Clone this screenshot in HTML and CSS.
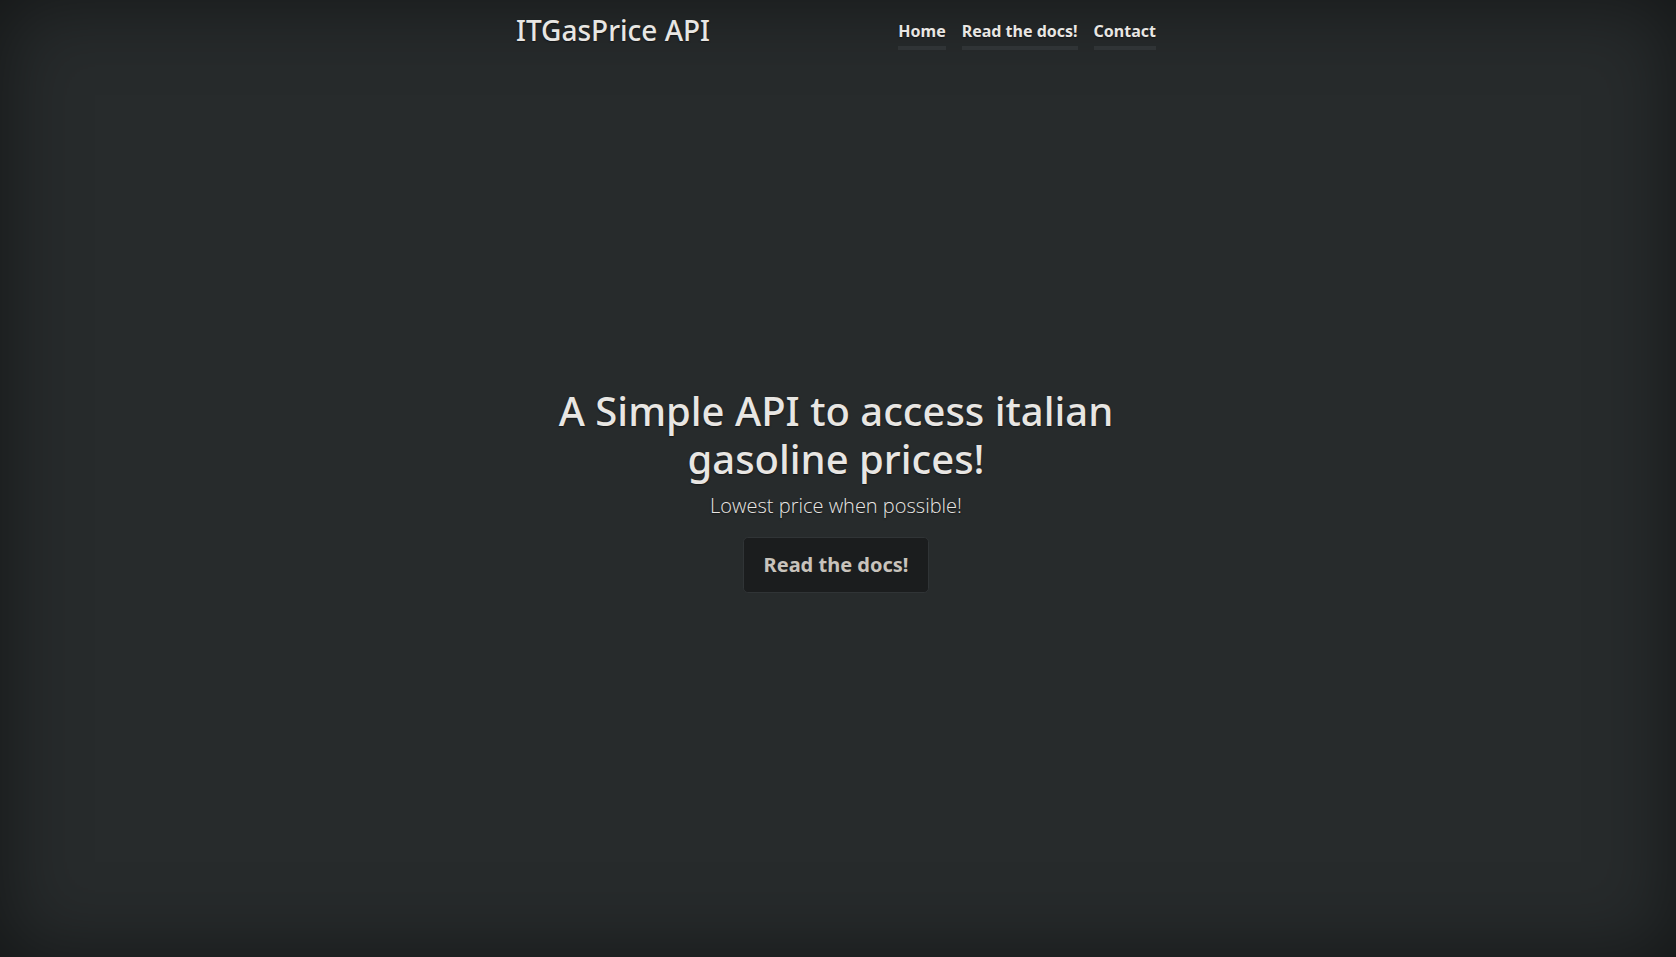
FILE: index.html
```html
<!DOCTYPE html>
<html lang="en">
<head>
<meta charset="utf-8">
<title>ITGasPrice API</title>
<link rel="stylesheet" href="styles.css">
</head>
<body>
<div class="cover">
  <header class="masthead">
    <h3 class="brand">ITGasPrice API</h3>
    <nav class="nav">
      <a class="nav-link" href="#">Home</a>
      <a class="nav-link" href="#">Read the docs!</a>
      <a class="nav-link" href="#">Contact</a>
    </nav>
  </header>
  <main class="inner">
    <h1 class="heading">A Simple API to access italian gasoline prices!</h1>
    <p class="lead">Lowest price when possible!</p>
    <p class="lead-btn"><a class="btn" href="#">Read the docs!</a></p>
  </main>
  <footer class="foot"></footer>
</div>
</body>
</html>
```

FILE: styles.css
```css
html, body {
  height: 100%;
}

body {
  margin: 0;
  display: flex;
  background-color: #272b2c;
  color: #e8e6e3;
  font-family: "Noto Sans", "Open Sans", sans-serif;
  text-shadow: 0 0.05rem 0.1rem rgba(0, 0, 0, 0.5);
  box-shadow: inset 0 0 5rem rgba(0, 0, 0, 0.5);
}

.cover {
  box-sizing: border-box;
  width: 100%;
  max-width: 42em;
  height: 100%;
  margin: 0 auto;
  padding: 14px 18px 12px 14px;
  display: flex;
  flex-direction: column;
}

.masthead {
  display: flex;
  justify-content: space-between;
  align-items: flex-start;
}

.brand {
  margin: 0;
  font-size: 28px;
  font-weight: 500;
  line-height: 1.2;
}

.nav {
  display: flex;
  gap: 16px;
}

.nav-link {
  display: block;
  padding: 5px 0 3px;
  font-size: 16px;
  font-weight: 700;
  line-height: 1.5;
  color: #e8e6e3;
  text-decoration: none;
  border-bottom: 4px solid #303436;
}

.inner {
  flex: 1;
  display: flex;
  flex-direction: column;
  justify-content: center;
  align-items: center;
  padding: 0 16px;
  text-align: center;
}

.heading {
  margin: 0 0 8px;
  font-size: 40px;
  font-weight: 500;
  line-height: 1.2;
}

.lead {
  margin: 0 0 16px;
  font-family: "Open Sans", "Noto Sans", sans-serif;
  font-size: 20px;
  font-weight: 300;
  line-height: 1.5;
}

.lead-btn {
  margin: 0 0 16px;
  font-size: 20px;
  line-height: 1.5;
}

.btn {
  display: inline-block;
  padding: 12px 20px;
  font-size: 20px;
  font-weight: 700;
  line-height: 1.5;
  color: #c8c3bc;
  text-decoration: none;
  text-shadow: none;
  background-color: #1b1d1e;
  border: 0.05rem solid #303436;
  border-radius: 4.8px;
}

.foot {
  height: 0;
}
```
